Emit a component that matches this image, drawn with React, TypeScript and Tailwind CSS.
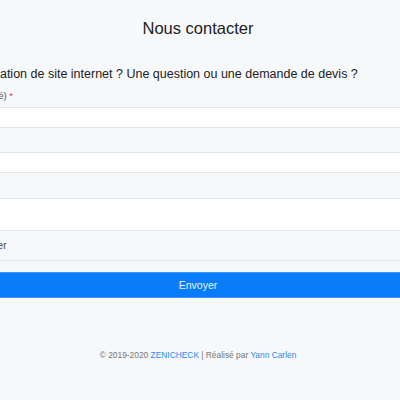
export default function App() {
  return (
    <div
      className="w-[400px] h-[400px] overflow-hidden bg-[#f7f8fa] text-[#212529]"
      style={{ fontFamily: '"Liberation Sans", Arial, sans-serif' }}
    >
      <div className="ml-[-89px] w-[574px] flex flex-col">
        <h1 className="mt-[18px] h-[20px] text-center text-[16.5px] leading-[20px] font-normal text-[#222]">
          Nous contacter
        </h1>
        <p className="mt-[29px] text-[12.5px] leading-[15px] text-[#222]">
          Un projet de création de site internet ? Une question ou une demande de devis ?
        </p>
        <form className="mt-[8px] flex flex-col" onSubmit={(e) => e.preventDefault()}>
          <label className="text-[9.5px] leading-[12px] text-[#555]">
            Votre nom (ou société) <span className="text-[#dc3545]">*</span>
          </label>
          <div className="mt-[5px] h-[21px] bg-white border-y border-[#e1e4e8]" />
          <div className="h-[24px] flex items-center text-[9.5px] text-[#555]">Email *</div>
          <div className="h-[21px] bg-white border-y border-[#e1e4e8]" />
          <div className="h-[25px] flex items-center text-[9.5px] text-[#555]">Message *</div>
          <div className="h-[33px] bg-white border-y border-[#e1e4e8]" />
          <div className="h-[30px] flex items-center pl-[21px] text-[10px] text-[#444] border-b border-[#e1e4e8]">
            Choisir un fichier
          </div>
          <button
            type="submit"
            className="mt-[11px] h-[26px] w-full bg-[#087cfa] border-y border-[#3a95ff] pt-[1px] text-[10.5px] text-[#eaf3ff] flex items-center justify-center"
          >
            Envoyer
          </button>
        </form>
        <footer className="mt-[51px] text-center text-[8.4px] leading-[12px] text-[#777]">
          © 2019-2020 <a className="text-[#2a8bf2]">ZENICHECK</a> | Réalisé par{" "}
          <a className="text-[#2a8bf2]">Yann Carlen</a>
        </footer>
      </div>
    </div>
  );
}
